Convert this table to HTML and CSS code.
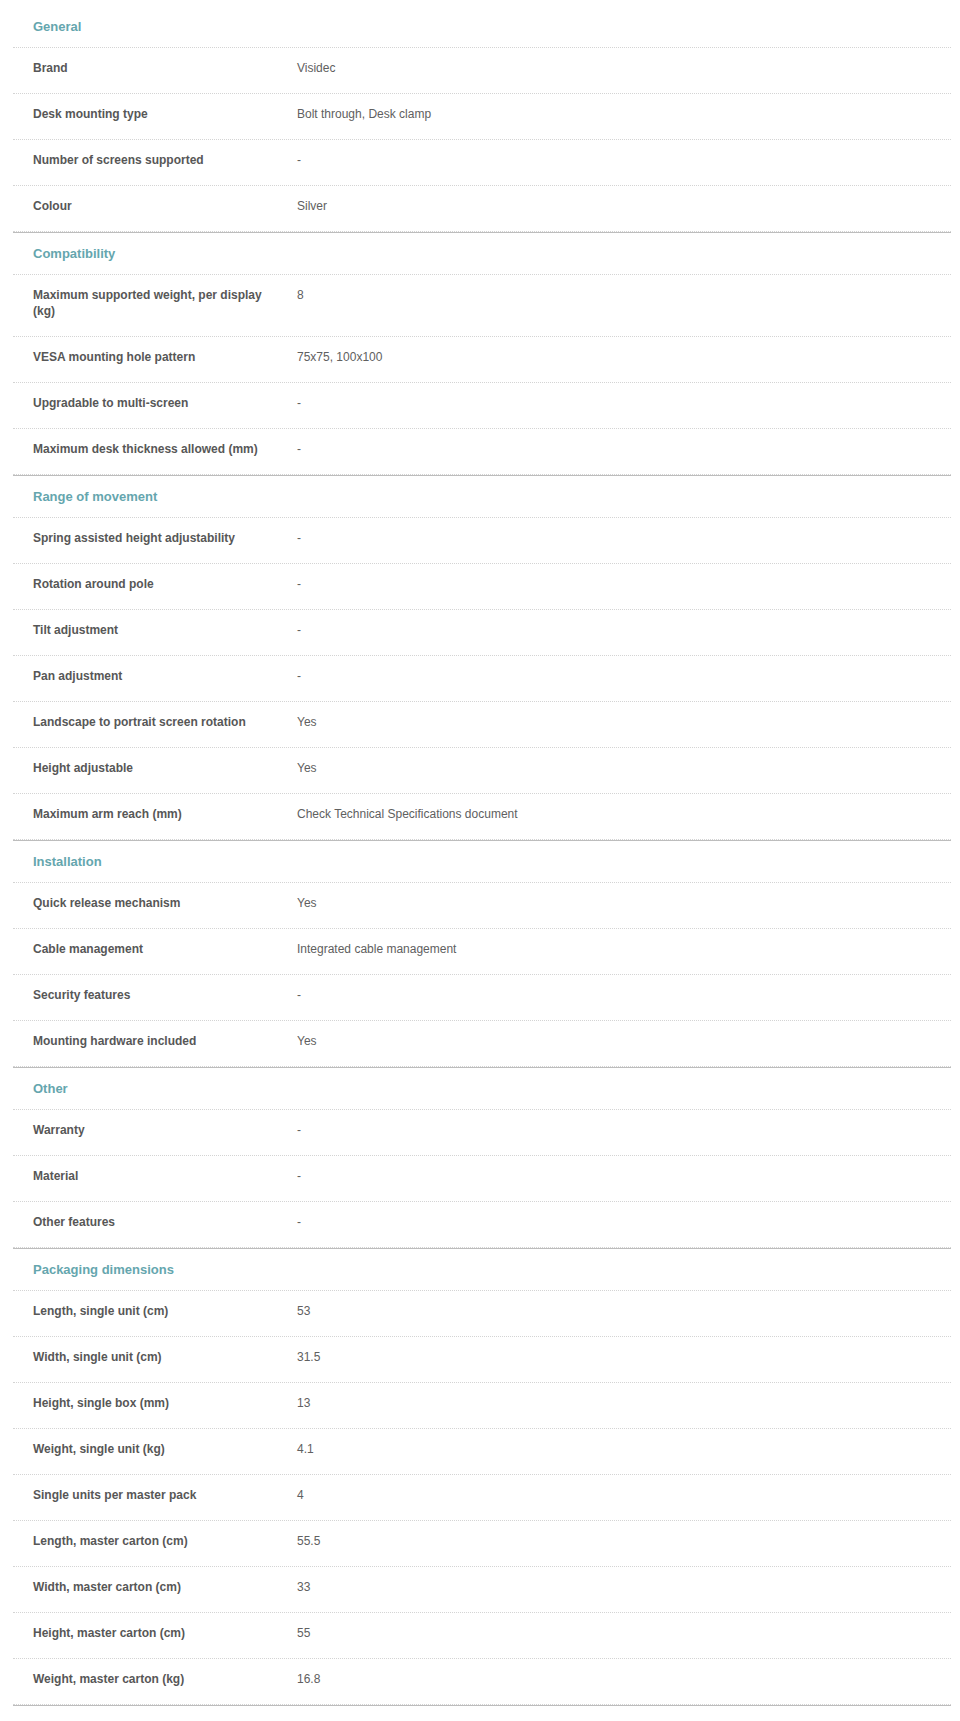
FILE: index.html
```html
<!DOCTYPE html>
<html lang="en">
<head>
<meta charset="utf-8">
<title>Specifications</title>
<link rel="stylesheet" href="styles.css">
</head>
<body>
<div class="specs">
  <section class="group">
    <h3 class="group-title">General</h3>
    <dl class="rows">
      <div class="row"><dt>Brand</dt><dd>Visidec</dd></div>
      <div class="row"><dt>Desk mounting type</dt><dd>Bolt through, Desk clamp</dd></div>
      <div class="row"><dt>Number of screens supported</dt><dd>-</dd></div>
      <div class="row"><dt>Colour</dt><dd>Silver</dd></div>
    </dl>
  </section>
  <section class="group">
    <h3 class="group-title">Compatibility</h3>
    <dl class="rows">
      <div class="row"><dt>Maximum supported weight, per display (kg)</dt><dd>8</dd></div>
      <div class="row"><dt>VESA mounting hole pattern</dt><dd>75x75, 100x100</dd></div>
      <div class="row"><dt>Upgradable to multi-screen</dt><dd>-</dd></div>
      <div class="row"><dt>Maximum desk thickness allowed (mm)</dt><dd>-</dd></div>
    </dl>
  </section>
  <section class="group">
    <h3 class="group-title">Range of movement</h3>
    <dl class="rows">
      <div class="row"><dt>Spring assisted height adjustability</dt><dd>-</dd></div>
      <div class="row"><dt>Rotation around pole</dt><dd>-</dd></div>
      <div class="row"><dt>Tilt adjustment</dt><dd>-</dd></div>
      <div class="row"><dt>Pan adjustment</dt><dd>-</dd></div>
      <div class="row"><dt>Landscape to portrait screen rotation</dt><dd>Yes</dd></div>
      <div class="row"><dt>Height adjustable</dt><dd>Yes</dd></div>
      <div class="row"><dt>Maximum arm reach (mm)</dt><dd>Check Technical Specifications document</dd></div>
    </dl>
  </section>
  <section class="group">
    <h3 class="group-title">Installation</h3>
    <dl class="rows">
      <div class="row"><dt>Quick release mechanism</dt><dd>Yes</dd></div>
      <div class="row"><dt>Cable management</dt><dd>Integrated cable management</dd></div>
      <div class="row"><dt>Security features</dt><dd>-</dd></div>
      <div class="row"><dt>Mounting hardware included</dt><dd>Yes</dd></div>
    </dl>
  </section>
  <section class="group">
    <h3 class="group-title">Other</h3>
    <dl class="rows">
      <div class="row"><dt>Warranty</dt><dd>-</dd></div>
      <div class="row"><dt>Material</dt><dd>-</dd></div>
      <div class="row"><dt>Other features</dt><dd>-</dd></div>
    </dl>
  </section>
  <section class="group">
    <h3 class="group-title">Packaging dimensions</h3>
    <dl class="rows">
      <div class="row"><dt>Length, single unit (cm)</dt><dd>53</dd></div>
      <div class="row"><dt>Width, single unit (cm)</dt><dd>31.5</dd></div>
      <div class="row"><dt>Height, single box (mm)</dt><dd>13</dd></div>
      <div class="row"><dt>Weight, single unit (kg)</dt><dd>4.1</dd></div>
      <div class="row"><dt>Single units per master pack</dt><dd>4</dd></div>
      <div class="row"><dt>Length, master carton (cm)</dt><dd>55.5</dd></div>
      <div class="row"><dt>Width, master carton (cm)</dt><dd>33</dd></div>
      <div class="row"><dt>Height, master carton (cm)</dt><dd>55</dd></div>
      <div class="row"><dt>Weight, master carton (kg)</dt><dd>16.8</dd></div>
    </dl>
  </section>
</div>
</body>
</html>
```

FILE: styles.css
```css
html, body {
  margin: 0;
  padding: 0;
  background: #ffffff;
}

body {
  font-family: "Liberation Sans", Arial, sans-serif;
  color: #555555;
}

.specs {
  width: 938px;
  margin: 0 0 0 13px;
  padding-top: 6px;
}

.group {
  border-bottom: 1px solid #bdbdbd;
}

.group-title {
  margin: 0;
  padding: 13px 20px 12px;
  font-size: 13px;
  line-height: 16px;
  font-weight: bold;
  color: #65a6ae;
  border-bottom: 1px dotted #d4d4d4;
}

.rows {
  margin: 0;
}

.row {
  display: grid;
  grid-template-columns: 284px 1fr;
  border-bottom: 1px dotted #d4d4d4;
  font-size: 12px;
  line-height: 16px;
}

.row dt {
  margin: 0;
  padding: 12px 24px 17px 20px;
  font-weight: bold;
  color: #575757;
}

.row dd {
  margin: 0;
  padding: 12px 20px 17px 0;
  color: #606060;
}
```
